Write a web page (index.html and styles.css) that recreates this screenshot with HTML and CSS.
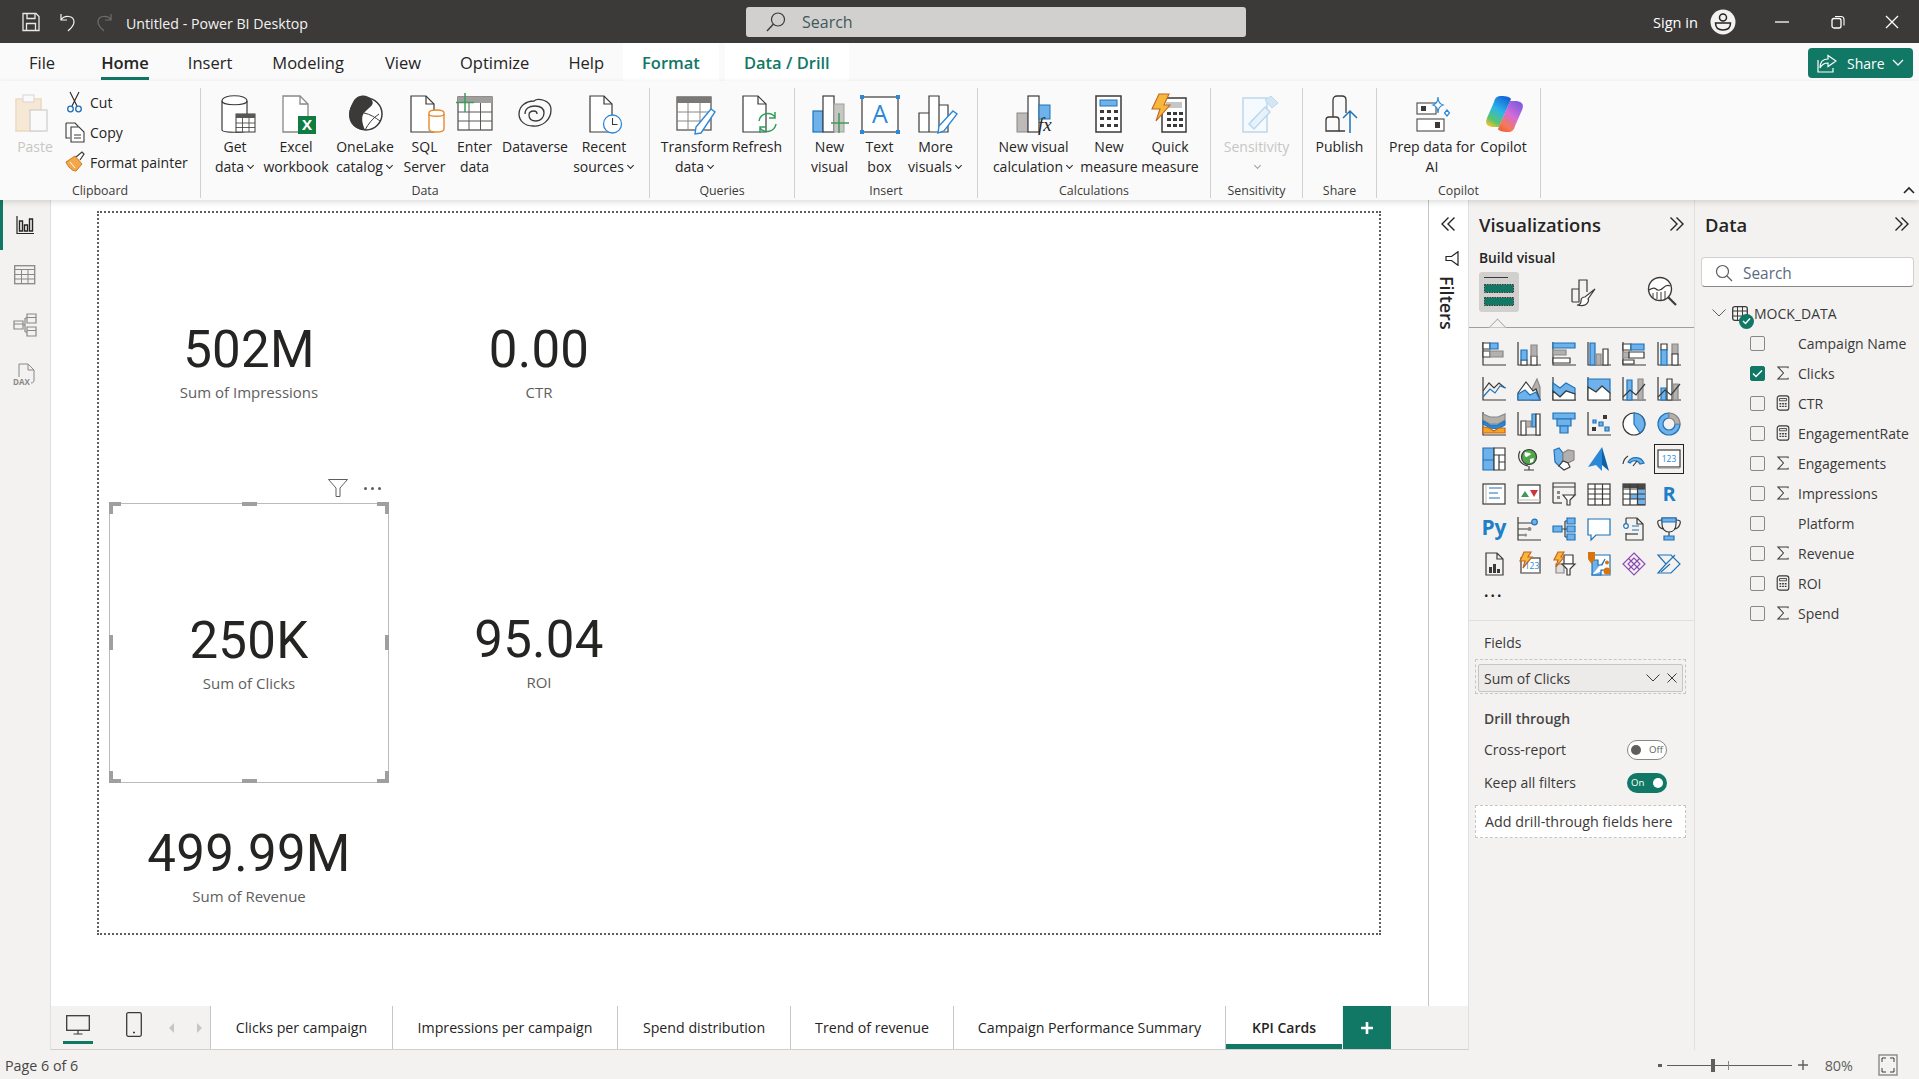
FILE: index.html
```html
<!DOCTYPE html>
<html lang="en">
<head>
<meta charset="utf-8">
<title>Untitled - Power BI Desktop</title>
<link rel="stylesheet" href="styles.css">
</head>
<body>
<svg class="defs" width="0" height="0" aria-hidden="true">
  <defs>
    <linearGradient id="cp1" x1="0.7" y1="0" x2="0.2" y2="1"><stop offset="0" stop-color="#1467d8"/><stop offset=".45" stop-color="#2bb6e8"/><stop offset=".8" stop-color="#5cc46a"/><stop offset="1" stop-color="#f2c230"/></linearGradient>
    <linearGradient id="cp2" x1="0.8" y1="0" x2="0.2" y2="1"><stop offset="0" stop-color="#7a5be0"/><stop offset=".45" stop-color="#d46bd8"/><stop offset=".8" stop-color="#f47a5a"/><stop offset="1" stop-color="#f2603a"/></linearGradient>
  </defs>
  <symbol id="sigma" viewBox="0 0 15 15"><path d="M13 2.5V1H2l6 6.5L2 14h11v-1.5" fill="none" stroke="#3b3a39" stroke-width="1.1"/></symbol>
  <symbol id="calc" viewBox="0 0 15 18"><rect x="1" y="1" width="13" height="16" rx="2.5" fill="none" stroke="#3b3a39" stroke-width="1.3"/><path d="M3.5 4h8v2.5h-8z" fill="none" stroke="#3b3a39"/><path d="M3.5 9h2v1.6h-2zm3 0h2v1.6h-2zm3 0h2v1.6h-2zm-6 3h2v1.6h-2zm3 0h2v1.6h-2zm3 0h2v1.6h-2z" fill="#3b3a39"/></symbol>
  <symbol id="dbl" viewBox="0 0 16 16"><path d="M1.5 1.5 8 8l-6.5 6.5M7.5 1.5 14 8l-6.5 6.5" fill="none" stroke="#252423" stroke-width="1.4"/></symbol>
</svg>

<header class="titlebar">
  <div class="tb-left">
    <svg class="ic-save" width="20" height="20" viewBox="0 0 20 20"><path d="M2 1.5h13l3 3v14H2z" fill="none" stroke="#e8e8e8" stroke-width="1.3"/><path d="M6 1.5v5h8v-5M5.500 18.500v-7h9v7" fill="none" stroke="#e8e8e8" stroke-width="1.3"/></svg>
    <svg class="ic-undo" width="18" height="20" viewBox="0 0 18 20"><path d="M2 2v6h6M2 8c3-5 13-5 13 2 0 4-3 6-6 9" fill="none" stroke="#f3f2f1" stroke-width="1.2"/></svg>
    <svg class="ic-redo" width="18" height="20" viewBox="0 0 18 20"><path d="M16 2v6h-6M16 8c-3-5-13-5-13 2 0 4 3 6 6 9" fill="none" stroke="#6e6d6b" stroke-width="1.2"/></svg>
    <span class="tb-title">Untitled - Power BI Desktop</span>
  </div>
  <div class="tb-search">
    <svg width="22" height="22" viewBox="0 0 22 22"><circle cx="13" cy="8.500" r="6.500" fill="none" stroke="#3b3a39" stroke-width="1.2"/><path d="M8.500 13 2 20" stroke="#3b3a39" stroke-width="1.400"/></svg>
    <span>Search</span>
  </div>
  <div class="tb-right">
    <span class="tb-sign">Sign in</span>
    <svg class="ic-avatar" width="26" height="26" viewBox="0 0 26 26"><circle cx="13" cy="13" r="12.500" fill="#f3f2f1"/><circle cx="13" cy="8.500" r="3.500" fill="none" stroke="#252423" stroke-width="1.500"/><path d="M5.500 14h15c0 4.500-3 7-7.500 7s-7.500-2.500-7.500-7z" fill="none" stroke="#252423" stroke-width="1.500"/></svg>
    <svg class="ic-min" width="14" height="14" viewBox="0 0 14 14"><path d="M0 7h14" stroke="#fff" stroke-width="1.300"/></svg>
    <svg class="ic-max" width="14" height="14" viewBox="0 0 14 14"><rect x="1" y="3.500" width="9" height="9.500" rx="2" fill="none" stroke="#fff" stroke-width="1.300"/><path d="M4 1.500h6c2 0 3 1 3 3v6" fill="none" stroke="#fff" stroke-width="1.100"/></svg>
    <svg class="ic-close" width="14" height="14" viewBox="0 0 14 14"><path d="M1 1l12 12M13 1 1 13" stroke="#fff" stroke-width="1.300"/></svg>
  </div>
</header>

<nav class="tabs">
  <span class="tab t-file">File</span>
  <span class="tab t-home">Home</span>
  <span class="tab t-insert">Insert</span>
  <span class="tab t-model">Modeling</span>
  <span class="tab t-view">View</span>
  <span class="tab t-opt">Optimize</span>
  <span class="tab t-help">Help</span>
  <span class="tab ctx t-format">Format</span>
  <span class="tab ctx t-drill">Data / Drill</span>
  <span class="share">
    <svg width="20" height="20" viewBox="0 0 20 20"><path d="M1 7v12h15v-4" fill="none" stroke="#fff" stroke-width="1.200"/><path d="M11 2.500l8 5.500-8 5.500v-3.500c-4 0-6 1-8 5 0-6 3-9 8-9z" fill="none" stroke="#fff" stroke-width="1.200"/></svg>
    <span>Share</span>
    <svg width="12" height="8" viewBox="0 0 12 8"><path d="M1 1l5 5 5-5" fill="none" stroke="#fff" stroke-width="1.300"/></svg>
  </span>
</nav>

<section class="ribbon">
  <div class="grp g-clip">
    <div class="grp-items">
      <div class="rb w65 dim">
        <svg class="ri" width="40" height="40" viewBox="0 0 40 40"><rect x="1" y="5" width="25" height="32" fill="#f6e8d4" stroke="#eadac0" stroke-width="1.500"/><rect x="8" y="1" width="11" height="7" fill="#fafafa" stroke="#d8d6d4"/><rect x="15" y="16" width="17" height="21" fill="#fafafa" stroke="#d2d0ce" stroke-width="1.300"/></svg>
        <span class="rb-text">Paste</span>
      </div>
      <div class="clip-col">
        <div class="clip-row"><svg width="20" height="22" viewBox="0 0 20 22"><path d="M5 1l7 14M14 1 7 15" stroke="#252423" fill="none" stroke-width="1.100"/><circle cx="5.500" cy="18" r="2.800" fill="none" stroke="#1f6fb5" stroke-width="1.300"/><circle cx="13.500" cy="18" r="2.800" fill="none" stroke="#1f6fb5" stroke-width="1.300"/></svg><span>Cut</span></div>
        <div class="clip-row"><svg width="20" height="22" viewBox="0 0 20 22"><path d="M1 2h9l3 3v1" fill="none" stroke="#3b3a39" stroke-width="1.100"/><path d="M1 2v15h4" fill="none" stroke="#3b3a39" stroke-width="1.100"/><path d="M6 6h8l5 5v10H6z" fill="#fff" stroke="#3b3a39" stroke-width="1.100"/><path d="M9 14h7M9 17h7" stroke="#3b3a39"/></svg><span>Copy</span></div>
        <div class="clip-row"><svg width="20" height="22" viewBox="0 0 20 22"><path d="M1 11l9-6 7 8-6 7c-4 0-8-4-10-9z" fill="#f4a64a" stroke="#c87a1e"/><path d="M11 6l6-5 2 2-4 6" fill="#fff" stroke="#3b3a39" stroke-width="1.200"/><path d="M5 11l5 6" stroke="#fff"/></svg><span>Format painter</span></div>
      </div>
    </div>
    <div class="grp-label">Clipboard</div>
  </div>

  <div class="grp g-data">
    <div class="grp-items">
      <div class="rb w60">
        <svg class="ri" width="40" height="40" viewBox="0 0 40 40"><path d="M7 7c0-7 25-7 25 0v29c0 3-25 3-25 0z" fill="#fff" stroke="#3b3a39" stroke-width="1.200"/><path d="M7 7c0 5 25 5 25 0" fill="none" stroke="#3b3a39" stroke-width="1.200"/><rect x="21" y="20" width="19" height="18" fill="#fff" stroke="#3b3a39"/><rect x="21" y="20" width="19" height="4" fill="#5a5856"/><path d="M27.500 24v14M34 24v14M21 29h19M21 33.500h19" stroke="#3b3a39" stroke-width=".8"/></svg>
        <span class="rb-text">Get</span><span class="rb-text">data<i class="cv"></i></span>
      </div>
      <div class="rb w62">
        <svg class="ri" width="40" height="40" viewBox="0 0 40 40"><path d="M7 2h17l8 8v28H7z" fill="#fff" stroke="#8a8886" stroke-width="1.300"/><path d="M24 2v8h8" fill="none" stroke="#8a8886" stroke-width="1.300"/><rect x="22" y="22" width="18" height="18" fill="#107c41"/><text x="31" y="36" class="svgx">X</text></svg>
        <span class="rb-text">Excel</span><span class="rb-text">workbook</span>
      </div>
      <div class="rb w76">
        <svg class="ri" width="40" height="40" viewBox="0 0 40 40"><circle cx="21" cy="20" r="16" fill="#fff" stroke="#3b3a39" stroke-width="1.500"/><path d="M8 8c4-8 14-8 18-3 5 6-2 8-7 14-3 4-2 10 1 17-9 0-16-6-16-15 0-5 2-9 4-13z" fill="#3b3a39"/><path d="M19 19c6 1 12 5 16 8M20 36c3-6 8-12 14-16" fill="none" stroke="#3b3a39"/></svg>
        <span class="rb-text">OneLake</span><span class="rb-text">catalog<i class="cv"></i></span>
      </div>
      <div class="rb w43">
        <svg class="ri" width="40" height="40" viewBox="0 0 40 40"><path d="M6 2h15l8 8v28H6z" fill="#fff" stroke="#3b3a39" stroke-width="1.200"/><path d="M21 2v8h8" fill="none" stroke="#3b3a39" stroke-width="1.200"/><path d="M24 19c0-4 15-4 15 0v16c0 4-15 4-15 0z" fill="#fff" stroke="#e8892c" stroke-width="1.400"/><path d="M24 20c0 3 15 3 15 0" fill="none" stroke="#e8892c" stroke-width="1.400"/></svg>
        <span class="rb-text">SQL</span><span class="rb-text">Server</span>
      </div>
      <div class="rb w57">
        <svg class="ri" width="40" height="40" viewBox="0 0 40 40"><rect x="3" y="3" width="34" height="33" fill="#fff" stroke="#5a5856" stroke-width="1.300"/><rect x="3" y="3" width="34" height="6" fill="#a19f9d"/><path d="M14 9v27M25.500 9v27M3 18h34M3 27h34" stroke="#5a5856"/><path d="M10 -1v19M1 8.500h18" stroke="#3f9a5c" stroke-width="1.500"/></svg>
        <span class="rb-text">Enter</span><span class="rb-text">data</span>
      </div>
      <div class="rb w64">
        <svg class="ri" width="40" height="40" viewBox="0 0 40 40"><path d="M4 20c0-8 7-13 15-13 3-3 17-2 17 9 0 10-9 17-18 16-8 0-14-5-14-12z" fill="none" stroke="#3b3a39" stroke-width="1.300"/><path d="M10 20c0-5 4-8 10-8s9 3 9 7-3 8-8 8-7-3-7-6 2-4 5-4 3 2 3 3" fill="none" stroke="#3b3a39" stroke-width="1.300"/></svg>
        <span class="rb-text">Dataverse</span>
      </div>
      <div class="rb w74">
        <svg class="ri" width="40" height="40" viewBox="0 0 40 40"><path d="M6 2h14l8 8v28H6z" fill="#fff" stroke="#3b3a39" stroke-width="1.200"/><path d="M20 2v8h8" fill="none" stroke="#3b3a39" stroke-width="1.200"/><circle cx="28.500" cy="30" r="9" fill="#fff" stroke="#2b88d8" stroke-width="1.300"/><path d="M28.500 24v6.500h5" fill="none" stroke="#3b3a39" stroke-width="1.100"/></svg>
        <span class="rb-text">Recent</span><span class="rb-text">sources<i class="cv"></i></span>
      </div>
    </div>
    <div class="grp-label">Data</div>
  </div>

  <div class="grp g-query">
    <div class="grp-items">
      <div class="rb w80">
        <svg class="ri" width="40" height="40" viewBox="0 0 40 40"><rect x="2" y="3" width="34" height="33" fill="#fff" stroke="#5a5856" stroke-width="1.300"/><rect x="2" y="3" width="34" height="6" fill="#7a7876"/><path d="M13 9v27M25 9v27M2 18h34M2 27h34" stroke="#8a8886"/><path d="M36 15l4 3-14 21-6 1 1-7z" fill="#fff" stroke="#2b88d8" stroke-width="1.400"/></svg>
        <span class="rb-text">Transform</span><span class="rb-text">data<i class="cv"></i></span>
      </div>
      <div class="rb w44">
        <svg class="ri" width="40" height="40" viewBox="0 0 40 40"><path d="M6 2h15l8 8v28H6z" fill="#fff" stroke="#3b3a39" stroke-width="1.200"/><path d="M21 2v8h8" fill="none" stroke="#3b3a39" stroke-width="1.200"/><path d="M22 27a9 9 0 0 1 16-4M38 18v6h-6M39 30a9 9 0 0 1-16 4M23 39v-6h6" fill="none" stroke="#2f9e5b" stroke-width="1.500"/></svg>
        <span class="rb-text">Refresh</span>
      </div>
    </div>
    <div class="grp-label">Queries</div>
  </div>

  <div class="grp g-insert">
    <div class="grp-items">
      <div class="rb w45">
        <svg class="ri" width="40" height="40" viewBox="0 0 40 40"><rect x="3" y="17" width="10" height="21" fill="#6fb1ea" stroke="#1f73b7" stroke-width="1.200"/><rect x="13" y="2" width="11" height="36" fill="#fff" stroke="#3b3a39" stroke-width="1.200"/><rect x="24" y="10" width="10" height="28" fill="#c8c6c4" stroke="#a19f9d"/><path d="M29 19v20M21 29h18" stroke="#3f9a5c" stroke-width="1.500"/></svg>
        <span class="rb-text">New</span><span class="rb-text">visual</span>
      </div>
      <div class="rb w55">
        <svg class="ri" width="40" height="40" viewBox="0 0 40 40"><rect x="2" y="3" width="36" height="35" fill="#fff" stroke="#3b3a39" stroke-width="1.200"/><path d="M0 1h4v4H0zM36 1h4v4h-4zM0 36h4v4H0zM36 36h4v4h-4z" fill="#2b88d8"/><text x="20" y="29" class="svga">A</text></svg>
        <span class="rb-text">Text</span><span class="rb-text">box</span>
      </div>
      <div class="rb w57">
        <svg class="ri" width="40" height="40" viewBox="0 0 40 40"><path d="M3 19h10v19H3zM13 2h10v36H13zM23 11h9v27h-9z" fill="#fff" stroke="#3b3a39" stroke-width="1.200"/><path d="M37 17l4 3-13 17-6 2 1-7z" fill="#fff" stroke="#2b88d8" stroke-width="1.400"/></svg>
        <span class="rb-text">More</span><span class="rb-text">visuals<i class="cv"></i></span>
      </div>
    </div>
    <div class="grp-label">Insert</div>
  </div>

  <div class="grp g-calc">
    <div class="grp-items">
      <div class="rb w97">
        <svg class="ri" width="40" height="40" viewBox="0 0 40 40"><rect x="3" y="19" width="11" height="19" fill="#bdbbb9" stroke="#8a8886"/><rect x="14" y="2" width="11" height="36" fill="#fff" stroke="#3b3a39" stroke-width="1.200"/><rect x="25" y="11" width="11" height="14" fill="#6fb1ea" stroke="#1f73b7"/><text x="24" y="37" class="svgfx">fx</text></svg>
        <span class="rb-text">New visual</span><span class="rb-text">calculation<i class="cv"></i></span>
      </div>
      <div class="rb w54">
        <svg class="ri" width="40" height="40" viewBox="0 0 40 40"><rect x="7" y="2" width="25" height="36" fill="#fff" stroke="#3b3a39" stroke-width="1.500"/><rect x="11" y="6" width="17" height="6" fill="#6fb1ea" stroke="#1f73b7"/><path d="M11 16h4v3h-4zM18 16h4v3h-4zM25 16h4v3h-4zM11 23h4v3h-4zM18 23h4v3h-4zM25 23h4v3h-4zM11 30h4v3h-4zM18 30h4v3h-4zM25 30h4v3h-4z" fill="#3b3a39"/></svg>
        <span class="rb-text">New</span><span class="rb-text">measure</span>
      </div>
      <div class="rb w68">
        <svg class="ri" width="40" height="40" viewBox="0 0 40 40"><rect x="12" y="4" width="24" height="34" fill="#fff" stroke="#3b3a39" stroke-width="1.500"/><rect x="16" y="8" width="16" height="6" fill="#c8c6c4"/><path d="M17 18h4v3h-4zM23 18h4v3h-4zM29 18h4v3h-4zM17 24h4v3h-4zM23 24h4v3h-4zM29 24h4v3h-4zM17 30h4v3h-4zM23 30h4v3h-4zM29 30h4v3h-4z" fill="#3b3a39"/><path d="M9 0h10l-5 11h6L6 27l4-12H2z" fill="#f5b73c" stroke="#c8641e" stroke-width="1.100"/></svg>
        <span class="rb-text">Quick</span><span class="rb-text">measure</span>
      </div>
    </div>
    <div class="grp-label">Calculations</div>
  </div>

  <div class="grp g-sens">
    <div class="grp-items">
      <div class="rb wfull dim">
        <svg class="ri" width="40" height="40" viewBox="0 0 40 40"><path d="M6 4h24v34H6z" fill="#f5fafe" stroke="#bcd8ec" stroke-width="1.500"/><path d="M12 30l16-17 5 5-16 17z" fill="#e8f2fa" stroke="#bcd8ec" stroke-width="1.500"/><path d="M28 6l6-4 7 7-6 5z" fill="#d3e6f4" stroke="#bcd8ec"/><path d="M14 27l12-12" stroke="#bcd8ec"/></svg>
        <span class="rb-text">Sensitivity</span><span class="rb-text"><i class="cv dimc"></i></span>
      </div>
    </div>
    <div class="grp-label">Sensitivity</div>
  </div>

  <div class="grp g-share">
    <div class="grp-items">
      <div class="rb wfull">
        <svg class="ri" width="40" height="40" viewBox="0 0 40 40"><path d="M6 37V26c0-2 1-3 3-3h7c2 0 3 1 3 3v11z" fill="none" stroke="#3b3a39" stroke-width="1.300"/><path d="M13 23V6c0-3 2-4 4-4h5c2 0 4 1 4 4v13M19 37h6" fill="none" stroke="#3b3a39" stroke-width="1.300"/><path d="M30 39V17M23 24l7-7 7 7" fill="none" stroke="#1f73b7" stroke-width="1.500"/></svg>
        <span class="rb-text">Publish</span>
      </div>
    </div>
    <div class="grp-label">Share</div>
  </div>

  <div class="grp g-copilot">
    <div class="grp-items">
      <div class="rb w88">
        <svg class="ri" width="40" height="40" viewBox="0 0 40 40"><rect x="5" y="9" width="19" height="11" fill="#fff" stroke="#5a5856" stroke-width="1.200"/><rect x="9" y="12" width="5" height="5" fill="#3b3a39"/><rect x="5" y="25" width="27" height="12" fill="#fff" stroke="#5a5856" stroke-width="1.200"/><rect x="23" y="28" width="5" height="6" fill="#3b3a39"/><path d="M26 3c0 5 2 7 5 8-3 1-5 3-5 8 0-5-2-7-5-8 3-1 5-3 5-8z" fill="#fff" stroke="#2b88d8" stroke-width="1.200"/><path d="M35 16l2.500 3-2.500 3-2.500-3z" fill="#fff" stroke="#2b88d8" stroke-width="1.200"/></svg>
        <span class="rb-text">Prep data for</span><span class="rb-text">AI</span>
      </div>
      <div class="rb w55">
        <svg class="ri" width="40" height="40" viewBox="0 0 40 40"><path d="M17 2C13 2 11 4 10 8L3 24c-3 7 2 9 7 9h5L27 5c-1-2-4-3-10-3z" fill="url(#cp1)"/><path d="M24 38c4 0 6-2 7-6l7-16c3-7-2-9-7-9h-5L14 35c1 2 4 3 10 3z" fill="url(#cp2)"/></svg>
        <span class="rb-text">Copilot</span>
      </div>
    </div>
    <div class="grp-label">Copilot</div>
  </div>
  <svg class="collapse" width="12" height="8" viewBox="0 0 12 8"><path d="M1 7l5-5 5 5" fill="none" stroke="#252423" stroke-width="1.600"/></svg>
</section>

<main class="workspace">
  <aside class="rail">
    <div class="rail-item active"><svg width="18" height="18" viewBox="0 0 18 18"><path d="M1 0v17.500h17" fill="none" stroke="#252423" stroke-width="1.200"/><path d="M3.500 5h3v10h-3zM8.500 9h3v6h-3zM13.500 3h3v12h-3z" fill="none" stroke="#252423" stroke-width="1.400"/></svg></div>
    <div class="rail-item"><svg width="22" height="20" viewBox="0 0 22 20"><rect x=".700" y=".700" width="20" height="18" fill="none" stroke="#8a8886" stroke-width="1.300"/><path d="M.7 4.500h20M.7 9.500h20M.7 14h20M7.500 4.500V19M14 4.500V19" stroke="#8a8886"/></svg></div>
    <div class="rail-item"><svg width="24" height="24" viewBox="0 0 24 24"><path d="M1 8h9v8H1zM14 1h9v9h-9zM14 14h9v9h-9zM10 12h2M12 5v14M12 5h2M12 19h2" fill="none" stroke="#8a8886" stroke-width="1.200"/><path d="M14 4.500h9M14 17.500h9M1 11h9" stroke="#8a8886"/></svg></div>
    <div class="rail-item"><svg width="24" height="24" viewBox="0 0 24 24"><path d="M6 14V1h9l6 6v10c0 2-1 3-3 3" fill="none" stroke="#8a8886"/><path d="M15 1v6h6" fill="none" stroke="#8a8886"/><text x="0" y="22" class="svgdax">DAX</text></svg></div>
  </aside>

  <div class="report">
    <div class="report-top">
      <div class="canvas">
        <div class="page">
          <div class="kpi k-a1"><div class="kpi-num">502M</div><div class="kpi-lbl">Sum of Impressions</div></div>
          <div class="kpi k-a2"><div class="kpi-num">0.00</div><div class="kpi-lbl">CTR</div></div>
          <div class="kpi kpi-sel">
            <div class="kpi-num">250K</div><div class="kpi-lbl">Sum of Clicks</div>
            <div class="sel-tools">
              <svg width="20" height="18" viewBox="0 0 20 18"><path d="M.5.500h19l-7.500 8.500v8.500h-4V9z" fill="none" stroke="#605e5c"/></svg>
              <span class="sel-dots"><i></i><i></i><i></i></span>
            </div>
            <i class="h h-tl"></i><i class="h h-tr"></i><i class="h h-bl"></i><i class="h h-br"></i>
            <i class="m m-t"></i><i class="m m-b"></i><i class="m m-l"></i><i class="m m-r"></i>
          </div>
          <div class="kpi k-b2"><div class="kpi-num">95.04</div><div class="kpi-lbl">ROI</div></div>
          <div class="kpi k-c1"><div class="kpi-num">499.99M</div><div class="kpi-lbl">Sum of Revenue</div></div>
        </div>
      </div>
      <aside class="filters">
        <svg class="f-dbl" width="16" height="16" viewBox="0 0 16 16"><use href="#dbl" transform="matrix(-1 0 0 1 16 0)"/></svg>
        <svg class="f-fun" width="14" height="15" viewBox="0 0 14 15"><path d="M13 .700v13.600L6.500 9.500H1V5.500h5.500z" fill="none" stroke="#252423" stroke-width="1.200"/></svg>
        <span class="f-text">Filters</span>
      </aside>
    </div>
    <div class="pagebar">
      <div class="pb-tools">
        <div class="dev dev-on"><svg width="24" height="20" viewBox="0 0 24 20"><rect x=".700" y=".700" width="22.600" height="14.600" fill="none" stroke="#3b3a39" stroke-width="1.300"/><path d="M12 15.500V19M7.500 19h9" stroke="#3b3a39" stroke-width="1.200"/></svg></div>
        <div class="dev"><svg width="16" height="25" viewBox="0 0 16 25"><rect x=".700" y=".700" width="14.600" height="23.600" rx="1.500" fill="none" stroke="#3b3a39" stroke-width="1.300"/><path d="M7 20.500h2" stroke="#3b3a39" stroke-width="1.600"/></svg></div>
        <span class="pb-arr l"></span><span class="pb-arr r"></span>
      </div>
      <span class="ptab p1">Clicks per campaign</span>
      <span class="ptab p2">Impressions per campaign</span>
      <span class="ptab p3">Spend distribution</span>
      <span class="ptab p4">Trend of revenue</span>
      <span class="ptab p5">Campaign Performance Summary</span>
      <span class="ptab ptab-on p6">KPI Cards</span>
      <span class="padd"><svg width="14" height="14" viewBox="0 0 14 14"><path d="M7 1v12M1 7h12" stroke="#fff" stroke-width="2.600"/></svg></span>
    </div>
  </div>

  <aside class="viz">
    <div class="pane-head"><span>Visualizations</span><svg width="16" height="16"><use href="#dbl"/></svg></div>
    <div class="build">Build visual</div>
    <div class="build-tabs">
      <div class="bt on"><svg width="40" height="40" viewBox="0 0 40 40"><path d="M5 5.500h24" stroke="#3b3a39"/><rect x="5.500" y="12.500" width="29" height="8" fill="#117865" stroke="#3b3a39" stroke-dasharray="1.500 1"/><rect x="5.500" y="25.500" width="29" height="8" fill="#117865" stroke="#3b3a39" stroke-dasharray="1.500 1"/></svg></div>
      <div class="bt bt2"><svg width="30" height="30" viewBox="0 0 30 30"><path d="M4 25V12h7V3h8v12M4 25h7V12" fill="none" stroke="#3b3a39" stroke-width="1.200"/><path d="M27 12 17 20c-3 0-4 2-4 4 0 3-2 4-4 4 4 1 9 1 11-3 1-2 0-3 0-3z" fill="#fff" stroke="#3b3a39" stroke-width="1.200"/></svg></div>
      <div class="bt bt3"><svg width="32" height="32" viewBox="0 0 32 32"><circle cx="14" cy="13" r="11.500" fill="#fff" stroke="#3b3a39" stroke-width="1.400"/><path d="M3 14c3-2 5-3 7-1 2 2 5 1 7-1 2-2 5-3 7-2" fill="none" stroke="#3b3a39" stroke-width="1.200"/><path d="M7 17v5M11 16v7M15 16v8M19 15v8" stroke="#3b3a39"/><path d="M22 21l8 8" stroke="#3b3a39" stroke-width="2.200"/></svg></div>
    </div>
    <div class="tab-rule"><i class="notch"></i></div>
    <div class="viz-grid">
      <svg class="vi" viewBox="0 0 24 24"><path class="d" d="M1 0v23h23"/><path class="w" d="M1 1h7v6H1z"/><path class="b" d="M8 1h8v6H8z"/><path class="w" d="M1 9h7v6H1z"/><path class="g" d="M8 9h13v6H8z"/></svg>
      <svg class="vi" viewBox="0 0 24 24"><path class="d" d="M1 0v23h23"/><path class="w" d="M4 18h6v5H4z"/><path class="b" d="M4 8h6v10H4z"/><path class="w" d="M14 14h6v9h-6z"/><path class="g" d="M14 3h6v11h-6z"/></svg>
      <svg class="vi" viewBox="0 0 24 24"><path class="d" d="M1 0v23h23"/><path class="b" d="M1 1h22v5H1z"/><path class="g" d="M1 8h13v5H1z"/><path class="w" d="M1 16h17v5H1z"/></svg>
      <svg class="vi" viewBox="0 0 24 24"><path class="d" d="M1 0v23h23"/><path class="b" d="M3 1h5v22H3z"/><path class="g" d="M9 12h5v11H9z"/><path class="w" d="M16 7h5v16h-5z"/></svg>
      <svg class="vi" viewBox="0 0 24 24"><path class="d" d="M1 0v23h23"/><path class="w" d="M1 2h8v6H1z"/><path class="b" d="M9 2h13v6H9z"/><path class="g" d="M1 10h6v6H1z"/><path class="w" d="M7 10h15v6H7z"/><path class="w" d="M1 18h11v4H1z"/></svg>
      <svg class="vi" viewBox="0 0 24 24"><path class="d" d="M1 0v23h23"/><path class="w" d="M4 2h6v6H4z"/><path class="b" d="M4 8h6v15H4z"/><path class="g" d="M15 2h6v10h-6z"/><path class="w" d="M15 12h6v11h-6z"/></svg>

      <svg class="vi" viewBox="0 0 24 24"><path class="d" d="M1 0v23h23"/><path class="d" d="M1 14l6-8 5 5 5-5 6 5"/><path class="bl" d="M1 20l7-8 5 4 5-7 6 2"/></svg>
      <svg class="vi" viewBox="0 0 24 24"><path class="g" d="M14 14l6-12 3 8v13H14z"/><path class="w" d="M1 16l8-11 7 9 3-2 4 11H1z"/><path class="b" d="M1 23v-6l7-4 5 5 6-3 4 8z"/></svg>
      <svg class="vi" viewBox="0 0 24 24"><path class="d" d="M1 0v23h23"/><path class="b" d="M1 6l7 5 6-5 9 5v6l-9-3-6 6-7-6z"/><path class="w" d="M1 14l7 6 6-6 9 3v6H1z"/></svg>
      <svg class="vi" viewBox="0 0 24 24"><path class="d" d="M1 0v23h23"/><path class="b" d="M1 2h22v14l-8-7-6 6-8-5z"/><path class="w" d="M1 10l8 5 6-6 8 7v7H1z"/></svg>
      <svg class="vi" viewBox="0 0 24 24"><path class="d" d="M1 0v23h23"/><path class="b" d="M5 3h5v20H5z"/><path class="g" d="M16 2h5v21h-5z"/><path class="d" d="M1 20l7-7 6 5 9-11"/></svg>
      <svg class="vi" viewBox="0 0 24 24"><path class="d" d="M1 0v23h23"/><path class="b" d="M4 11h5v12H4z"/><path class="w" d="M10 2h5v21h-5z"/><path class="g" d="M16 7h5v16h-5z"/><path class="d" d="M1 20l7-7 6 5 9-11"/></svg>

      <svg class="vi" viewBox="0 0 24 24"><path class="d" d="M1 0v23h23"/><path class="g" d="M1 2l7 3 8 0 7-3v6l-7 4-8 0-7-4z"/><path class="bf" d="M1 9l7 4 8 0 7-4v4l-7 4-8-1-7-4z"/><path class="of" d="M1 15l6 1 5 3 5-3 6 0v5H1z"/></svg>
      <svg class="vi" viewBox="0 0 24 24"><path class="d" d="M1 0v23h23"/><path class="w" d="M4 9h5v14H4z"/><path class="g" d="M9 9h5v6H9z"/><path class="b" d="M15 2h4v13h-4z"/><path class="w" d="M19 2h4v21h-4z"/></svg>
      <svg class="vi" viewBox="0 0 24 24"><path class="b" d="M1 1h22v6H1z"/><path class="b" d="M5 7h14v7H5z"/><path class="b" d="M8 14h8v7H8z"/></svg>
      <svg class="vi" viewBox="0 0 24 24"><path class="d" d="M1 0v23h23"/><path d="M16 3h4v4h-4zM5 15h4v4H5z" class="k"/><path d="M6 8h3v3H6zM12 10h4v4h-4zM18 15h4v4h-4z" class="b"/></svg>
      <svg class="vi" viewBox="0 0 24 24"><circle class="w" cx="12" cy="12" r="11"/><path class="b" d="M12 1a11 11 0 0 1 6 20l-6-9z"/></svg>
      <svg class="vi" viewBox="0 0 24 24"><path class="b" d="M12 1a11 11 0 1 0 11 11h-5a6 6 0 1 1-6-6z"/><path class="g" d="M12 1a11 11 0 0 1 11 11h-5a6 6 0 0 0-6-6z"/></svg>

      <svg class="vi" viewBox="0 0 24 24"><path class="b" d="M1 1h11v12H1zM1 13h11v10H1z"/><path class="w" d="M12 1h11v7H12zM12 8h5v15h-5zM17 8h6v7h-6zM17 15h6v8h-6z"/></svg>
      <svg class="vi" viewBox="0 0 24 24"><circle cx="12" cy="10" r="7.500" fill="#4ea94e" stroke="#3b3a39"/><path d="M8 5c2 1 5 0 6 2-1 2-3 1-4 3-2 0-3-2-2-5zM13 12l4-1-1 4-3 1z" fill="#fff"/><path class="d" d="M3 4c-3 6-1 13 8 15M7 23h10M12 19v4"/></svg>
      <svg class="vi" viewBox="0 0 24 24"><path class="b" d="M2 3l5-2 4 5 0 8-4 5-4-4z"/><path class="g" d="M11 6l5-3 6 1v9l-6 3-5-2z"/><path class="w" d="M7 19l4-5 5 2 2 4-6 3z" fill-opacity="1"/></svg>
      <svg class="vi" viewBox="0 0 24 24"><path d="M15 0v24l-6-6-8 2z" fill="#2b88d8"/><path d="M15 0l7 24-7-6z" fill="#0f5fa8"/></svg>
      <svg class="vi" viewBox="0 0 24 24"><path class="b" d="M6 15a9 9 0 0 1 16 1l-4 1a6 6 0 0 0-10-1z"/><path class="d" d="M1 17a11 11 0 0 1 5-8M11 19l4-5"/></svg>
      <div class="vi-sel"><svg class="vi" viewBox="0 0 24 24"><rect class="w" x="1" y="3" width="22" height="17"/><path d="M1 21h22" stroke="#a19f9d" stroke-width="2"/><text x="12" y="15" class="svg123">123</text></svg></div>

      <svg class="vi" viewBox="0 0 24 24"><rect class="w" x="1" y="2" width="22" height="20"/><path d="M4 3v18" stroke="#c8c6c4"/><path d="M7 6h13M7 11h9M7 16h11" stroke="#1f73b7" stroke-width="1.800"/></svg>
      <svg class="vi" viewBox="0 0 24 24"><rect class="w" x="1" y="3" width="22" height="18"/><path d="M4 15l4-6 4 6z" fill="#3f9a5c"/><path d="M13 8h8l-4 7z" fill="#d13438"/><path d="M1 18h22" stroke="#c8c6c4"/></svg>
      <svg class="vi" viewBox="0 0 24 24"><path class="d" d="M1 21V1h22v12M1 5h22"/><path class="d" d="M1 21h9"/><path d="M5 9h3v3H5zM5 14h3v3H5z" fill="#8a8886"/><path class="w" d="M11 13h12l-5 5v5h-3v-5z"/></svg>
      <svg class="vi" viewBox="0 0 24 24"><rect class="w" x="1" y="2" width="22" height="21"/><path class="d" d="M1 7h22M1 12h22M1 17h22M8 2v21M15.500 2v21"/></svg>
      <svg class="vi" viewBox="0 0 24 24"><rect class="w" x="1" y="2" width="22" height="21"/><path d="M1 2h22v4H1zM15 6h8v17h-8z" fill="#4a4846"/><path d="M15 7h8v15h-8zM8 12h7v5H8z" fill="#6fb1ea"/><path class="d" d="M1 7h22M1 12h22M1 17h22M8 2v21M15.500 2v21"/></svg>
      <svg class="vi" viewBox="0 0 24 24"><text x="12" y="19" class="svgr">R</text></svg>

      <svg class="vi" viewBox="0 0 24 24"><text x="12" y="18" class="svgpy">Py</text></svg>
      <svg class="vi" viewBox="0 0 24 24"><path class="d" d="M1 0v23h23M1 6h14M1 12h10M1 18h6"/><circle cx="17.500" cy="5" r="2.800" fill="#6fb1ea" stroke="#1f73b7"/><circle cx="12.500" cy="12" r="2" fill="#8a8886"/><circle cx="8.500" cy="18" r="1.500" fill="#8a8886"/></svg>
      <svg class="vi" viewBox="0 0 24 24"><path class="d" d="M10 12h3M13 4v16M13 4h2M13 12h2M13 20h2"/><path class="b" d="M1 9h9v6H1zM15 1h8v6h-8zM15 9h8v6h-8zM15 17h8v6h-8z"/></svg>
      <svg class="vi" viewBox="0 0 24 24"><path d="M1 2h22v16H9l-5 5v-5H1z" fill="#fff" stroke="#1f73b7" stroke-width="1.300"/></svg>
      <svg class="vi" viewBox="0 0 24 24"><path class="d" d="M4 1h11l6 6v16H4V16M4 11V1M15 1v6h6"/><circle cx="4" cy="9" r="2.300" fill="#fff" stroke="#1f73b7"/><path d="M10 9h7M10 13h7" stroke="#1f73b7"/><path d="M4 17h12" stroke="#3b3a39"/></svg>
      <svg class="vi" viewBox="0 0 24 24"><path class="d" d="M5 3c-4 0-5 1-4 4s3 5 6 5M19 3c4 0 5 1 4 4s-3 5-6 5"/><path class="d" d="M5 1h14v6c0 5-3 8-7 8s-7-3-7-8z"/><path d="M5 1h14v4H5z" fill="#6fb1ea" stroke="#1f73b7"/><path class="d" d="M12 15v4"/><path class="b" d="M7 19h10v4H7z"/></svg>

      <svg class="vi" viewBox="0 0 24 24"><path class="d" d="M4 23V1h11l6 6v16zM15 1v6h6"/><path d="M7 15h3v6H7zM11 12h3v9h-3zM15 17h3v4h-3z" fill="#3b3a39"/></svg>
      <svg class="vi" viewBox="0 0 24 24"><rect class="w" x="4" y="6" width="19" height="15"/><path d="M4 21h19" stroke="#a19f9d" stroke-width="1.600"/><path d="M7 0h7l-3 5h4l-9 11 2-7H3z" fill="#f5b73c" stroke="#c8641e" stroke-width=".8"/><text x="15" y="17" class="svg123">123</text></svg>
      <svg class="vi" viewBox="0 0 24 24"><path class="g" d="M4 12h8v9H4z" fill-opacity=".3"/><path class="w" d="M12 3h9v9h-9z"/><path class="w" d="M10 12h13l-5 5v6h-3v-6z"/><path d="M6 0h6L9 5h3l-8 10 2-7H2z" fill="#f5b73c" stroke="#c8641e" stroke-width=".8"/></svg>
      <svg class="vi" viewBox="0 0 24 24"><path d="M4 3h19v20H4" fill="#fff" stroke="#1f73b7" stroke-width="1.600"/><path d="M5 23V8h6v5h4l3-6M5 23h9v-5h4" fill="#6fb1ea" stroke="#1f73b7"/><path d="M1 0h7v7l-3.500 5L1 7z" fill="#d9730d"/><circle cx="20" cy="19" r="3.500" fill="#d9730d"/><circle cx="20" cy="10.500" r="2" fill="#d9730d"/></svg>
      <svg class="vi" viewBox="0 0 24 24"><path d="M12 1l11 11-11 11L1 12z M12 6l-6 6 6 6 6-6z" fill="none" stroke="#8c4bb5" stroke-width="1.300"/><path d="M6.500 6.500 17.500 17.500M17.500 6.500 6.500 17.500" stroke="#8c4bb5"/></svg>
      <svg class="vi" viewBox="0 0 24 24"><path d="M1 3h13l9 9-9 9H1l8-9z" fill="none" stroke="#1f73b7" stroke-width="1.400"/><path d="M9 12l9-9M4 20l9-8" fill="none" stroke="#1f73b7"/></svg>
      <span class="vi-more">...</span>
    </div>

    <div class="well-sec">
      <div class="well-title">Fields</div>
      <div class="well-drop">
        <div class="pill"><span>Sum of Clicks</span>
          <svg class="pill-cv" width="14" height="8" viewBox="0 0 14 8"><path d="M.5.500 7 7 13.500.5" fill="none" stroke="#3b3a39"/></svg>
          <svg width="10" height="10" viewBox="0 0 10 10"><path d="M.5.500l9 9M9.500.500l-9 9" stroke="#3b3a39"/></svg>
        </div>
      </div>
      <div class="drill-title">Drill through</div>
      <div class="opt-row"><span>Cross-report</span><span class="tog off"><i></i><b>Off</b></span></div>
      <div class="opt-row"><span>Keep all filters</span><span class="tog on"><b>On</b><i></i></span></div>
      <div class="add-drop">Add drill-through fields here</div>
    </div>
  </aside>

  <aside class="data">
    <div class="pane-head d-head"><span>Data</span><svg width="16" height="16"><use href="#dbl"/></svg></div>
    <div class="d-search"><svg width="18" height="18" viewBox="0 0 18 18"><circle cx="7.500" cy="7.500" r="6" fill="none" stroke="#605e5c" stroke-width="1.200"/><path d="M12 12l5 5" stroke="#605e5c" stroke-width="1.200"/></svg><span>Search</span></div>
    <div class="tree-root">
      <svg width="14" height="8" viewBox="0 0 14 8"><path d="M.5.500 7 7 13.500.5" fill="none" stroke="#605e5c"/></svg>
      <span class="tbl-ic"><svg width="16" height="15" viewBox="0 0 16 15"><rect x=".7" y=".7" width="14.600" height="13.600" rx="2" fill="none" stroke="#3b3a39" stroke-width="1.300"/><path d="M.7 5h14.600M.7 10h14.600M5.500.7v13.600M10.500.7v13.600" stroke="#3b3a39"/></svg><i class="tbl-ok"><svg width="9" height="8" viewBox="0 0 9 8"><path d="M1 4l2.500 2.500L8 1.500" fill="none" stroke="#fff" stroke-width="1.400"/></svg></i></span>
      <span class="tree-name">MOCK_DATA</span>
    </div>
    <div class="f-row"><i class="cb"></i><span class="f-ic"></span><span>Campaign Name</span></div>
    <div class="f-row"><i class="cb cb-on"><svg width="11" height="9" viewBox="0 0 11 9"><path d="M1 4.500 4 7.500l6-6" fill="none" stroke="#fff" stroke-width="1.400"/></svg></i><svg class="f-ic" width="14" height="14"><use href="#sigma"/></svg><span>Clicks</span></div>
    <div class="f-row"><i class="cb"></i><svg class="f-ic" width="14" height="16"><use href="#calc"/></svg><span>CTR</span></div>
    <div class="f-row"><i class="cb"></i><svg class="f-ic" width="14" height="16"><use href="#calc"/></svg><span>EngagementRate</span></div>
    <div class="f-row"><i class="cb"></i><svg class="f-ic" width="14" height="14"><use href="#sigma"/></svg><span>Engagements</span></div>
    <div class="f-row"><i class="cb"></i><svg class="f-ic" width="14" height="14"><use href="#sigma"/></svg><span>Impressions</span></div>
    <div class="f-row"><i class="cb"></i><span class="f-ic"></span><span>Platform</span></div>
    <div class="f-row"><i class="cb"></i><svg class="f-ic" width="14" height="14"><use href="#sigma"/></svg><span>Revenue</span></div>
    <div class="f-row"><i class="cb"></i><svg class="f-ic" width="14" height="16"><use href="#calc"/></svg><span>ROI</span></div>
    <div class="f-row"><i class="cb"></i><svg class="f-ic" width="14" height="14"><use href="#sigma"/></svg><span>Spend</span></div>
  </aside>
</main>

<footer class="status">
  <span class="st-page">Page 6 of 6</span>
  <div class="st-zoom">
    <span class="st-minus"></span>
    <span class="st-track"><i class="st-thumb"></i><i class="st-tick"></i></span>
    <svg width="10" height="10" viewBox="0 0 10 10"><path d="M5 0v10M0 5h10" stroke="#605e5c" stroke-width="1.400"/></svg>
    <span class="st-pct">80%</span>
    <svg class="st-fit" width="20" height="22" viewBox="0 0 20 22"><rect x="1" y="1" width="18" height="20" fill="none" stroke="#8a8886" stroke-width="1.400"/><path d="M4 8V4h4M12 4h4v4M16 14v4h-4M8 18H4v-4" fill="none" stroke="#3b3a39"/></svg>
  </div>
</footer>
</body>
</html>
```

FILE: styles.css
```css
* { box-sizing: border-box; }
html, body { margin: 0; padding: 0; }
body {
  width: 1919px; height: 1079px; overflow: hidden;
  display: flex; flex-direction: column;
  font-family: "Open Sans", "Noto Sans", sans-serif;
  font-size: 14px; color: #252423; background: #f3f2f1;
}
.defs { position: absolute; }
svg { display: block; flex: none; }
i { font-style: normal; }

/* title bar */
.titlebar { height: 43px; flex: none; background: #3b3a39; display: flex; align-items: center; position: relative; color: #fff; }
.tb-left { display: flex; align-items: center; width: 746px; padding-left: 21px; }
.ic-undo { margin-left: 18px; }
.ic-redo { margin-left: 18px; }
.tb-title { margin: 3px 0 0 13px; font-size: 14.2px; color: #f3f2f1; }
.tb-search { width: 500px; height: 30px; background: #d2d0ce; border-radius: 3px; display: flex; align-items: center; padding-left: 19px; color: #3e5a5a; font-size: 16px; }
.tb-search span { margin-left: 15px; }
.tb-right { margin-left: auto; display: flex; align-items: center; padding-right: 20px; }
.tb-sign { font-size: 14.6px; color: #fff; margin-right: 12px; }
.ic-min { margin-left: 39px; }
.ic-max { margin-left: 42px; }
.ic-close { margin-left: 40px; }

/* tabs */
.tabs { height: 38px; flex: none; background: #fafafa; display: flex; align-items: stretch; position: relative; font-size: 16.5px; }
.tab { display: flex; align-items: center; white-space: nowrap; color: #252423; }
.t-file { margin-left: 29px; }
.t-home { margin-left: 46px; font-weight: 600; position: relative; }
.t-home::after { content: ""; position: absolute; left: 0; right: 0; bottom: 1px; height: 3px; background: #117865; }
.t-insert { margin-left: 39px; }
.t-model { margin-left: 40px; }
.t-view { margin-left: 41px; }
.t-opt { margin-left: 39px; }
.t-help { margin-left: 39px; }
.ctx { color: #117865; font-weight: 600; background: #fff; padding: 0 19px; justify-content: center; }
.t-format { margin-left: 19px; }
.t-drill { margin-left: 6px; }
.share { position: absolute; left: 1808px; top: 5px; width: 105px; height: 30px; background: #117865; border-radius: 4px; color: #fff; display: flex; align-items: center; padding-left: 9px; font-size: 14px; }
.share span { margin-left: 10px; }
.share svg + span + svg { margin-left: 7px; }

/* ribbon */
.ribbon { height: 119px; flex: none; background: #fafafa; display: flex; align-items: flex-start; padding-top: 7px; position: relative; z-index: 2; box-shadow: 0 2px 6px rgba(0,0,0,.14); }
.grp { height: 110px; border-right: 1px solid #d2d0ce; display: flex; flex-direction: column; flex: none; }
.grp-items { height: 98px; display: flex; align-items: flex-start; }
.grp-label { height: 14px; line-height: 14px; text-align: center; font-size: 12.4px; color: #3b3a39; white-space: nowrap; }
.g-clip { width: 201px; }
.g-data { width: 449px; }
.g-query { width: 145px; }
.g-insert { width: 183px; }
.g-calc { width: 233px; }
.g-sens { width: 92px; }
.g-share { width: 74px; }
.g-copilot { width: 164px; }
.g-data .grp-items { padding-left: 4px; }
.g-query .grp-items { padding-left: 5px; }
.g-insert .grp-items { padding-left: 12px; }
.g-calc .grp-items { padding-left: 7px; }
.g-copilot .grp-items { padding-left: 11px; }
.rb { display: flex; flex-direction: column; align-items: center; flex: none; padding-top: 6px; }
.ri { overflow: visible; margin-bottom: 3px; }
.rb-text { height: 20px; line-height: 20px; font-size: 14px; color: #252423; white-space: nowrap; display: flex; align-items: center; }
.dim .rb-text { color: #c8c6c4; }
.w43 { width: 43px; } .w44 { width: 44px; } .w45 { width: 45px; } .w54 { width: 54px; } .w55 { width: 55px; } .w57 { width: 57px; }
.w60 { width: 60px; } .w62 { width: 62px; } .w64 { width: 64px; } .w65 { width: 70px; } .w68 { width: 68px; } .w74 { width: 74px; } .w76 { width: 76px; }
.w80 { width: 80px; } .w88 { width: 88px; } .w97 { width: 97px; } .wfull { width: 100%; }
.cv { display: inline-block; width: 5px; height: 5px; border-right: 1.2px solid #252423; border-bottom: 1.2px solid #252423; transform: rotate(45deg); margin: 0 2px 3px 4px; }
.dimc { border-color: #a19f9d; margin-left: 3px; }
.clip-col { display: flex; flex-direction: column; margin-top: -1px; margin-left: -5px; }
.clip-row { height: 30px; display: flex; align-items: center; font-size: 14px; white-space: nowrap; }
.clip-row span { margin-left: 5px; }
.collapse { position: absolute; left: 1903px; top: 105px; }
.svgx { font: 700 15px "Open Sans", sans-serif; fill: #fff; text-anchor: middle; }
.svga { font: 400 25px "Open Sans", sans-serif; fill: #2b88d8; text-anchor: middle; }
.svgfx { font: italic 400 19px "Liberation Serif", serif; fill: #252423; }
.svgdax { font: 700 8px "Open Sans", sans-serif; fill: #8a8886; }
.svg123 { font: 400 8.5px "Open Sans", sans-serif; fill: #2b88d8; text-anchor: middle; }
.svgr { font: 700 20px "Open Sans", sans-serif; fill: #1f7fc7; text-anchor: middle; }
.svgpy { font: 700 21px "Open Sans", sans-serif; fill: #1f7fc7; text-anchor: middle; }

/* workspace */
.workspace { flex: 1; min-height: 0; display: flex; }
.rail { width: 51px; flex: none; background: #f3f2f1; border-right: 1px solid #e1dfdd; }
.rail-item { height: 50px; display: flex; align-items: center; justify-content: center; position: relative; }
.rail-item.active::before { content: ""; position: absolute; left: 0; top: 0; bottom: 0; width: 3px; background: #117865; }

.report { width: 1417px; flex: none; display: flex; flex-direction: column; }
.report-top { flex: 1; min-height: 0; display: flex; background: #fff; }
.canvas { width: 1377px; flex: none; padding: 11px 0 0 46px; }
.page { width: 1284px; height: 724px; border: 2px dotted #605e5c; position: relative; }
.kpi { position: absolute; width: 280px; padding-top: 100px; display: flex; flex-direction: column; align-items: center; }
.k-a1 { left: 10px; top: 7px; }
.k-a2 { left: 300px; top: 7px; }
.k-b2 { left: 300px; top: 297px; }
.k-c1 { left: 10px; top: 511px; }
.kpi-num { height: 60px; line-height: 60px; font-family: Roboto, sans-serif; font-size: 51px; letter-spacing: .3px; color: #252423; white-space: nowrap; }
.kpi-lbl { height: 20px; line-height: 20px; margin-top: 2px; font-size: 15px; color: #605e5c; white-space: nowrap; }
.kpi-sel { left: 10px; top: 290px; height: 280px; padding-top: 107px; border: 1px solid #bdbbb9; }
.sel-tools { position: absolute; left: 218px; top: -25px; display: flex; align-items: center; }
.sel-dots { display: flex; gap: 4px; margin-left: 16px; }
.sel-dots i { width: 3px; height: 3px; border-radius: 50%; background: #605e5c; }
.h { position: absolute; width: 12px; height: 12px; border: 0 solid #a19f9d; }
.h-tl { left: -1px; top: -2px; border-width: 4px 0 0 4px; }
.h-tr { right: -1px; top: -2px; border-width: 4px 4px 0 0; }
.h-bl { left: -1px; bottom: -1px; border-width: 0 0 4px 4px; }
.h-br { right: -1px; bottom: -1px; border-width: 0 4px 4px 0; }
.m { position: absolute; background: #a19f9d; }
.m-t { left: 132px; top: -2px; width: 15px; height: 4px; }
.m-b { left: 132px; bottom: -1px; width: 15px; height: 4px; }
.m-l { left: -1px; top: 131px; width: 4px; height: 15px; }
.m-r { right: -1px; top: 131px; width: 4px; height: 15px; }

.filters { width: 40px; flex: none; background: #fff; border-left: 1px solid #c8c6c4; position: relative; }
.f-dbl { position: absolute; left: 11px; top: 16px; }
.f-fun { position: absolute; left: 16px; top: 51px; }
.f-text { position: absolute; left: 6px; top: 76px; writing-mode: vertical-rl; font-size: 18px; font-weight: 600; color: #252423; }

.pagebar { height: 44px; flex: none; display: flex; align-items: stretch; border-bottom: 1px solid #d2d0ce; background: #f3f2f1; position: relative; z-index: 1; }
.pb-tools { width: 160px; flex: none; display: flex; align-items: flex-start; background: #f3f2f1; border-right: 1px solid #c8c6c4; position: relative; padding-left: 12px; }
.dev { height: 38px; width: 30px; display: flex; justify-content: center; padding-top: 9px; }
.dev + .dev { margin-left: 26px; padding-top: 6px; }
.dev-on { border-bottom: 3px solid #117865; }
.pb-arr { position: absolute; top: 17px; width: 0; height: 0; border-top: 5px solid transparent; border-bottom: 5px solid transparent; }
.pb-arr.l { left: 118px; border-right: 5px solid #c8c6c4; }
.pb-arr.r { left: 146px; border-left: 5px solid #c8c6c4; }
.ptab { background: #fff; display: flex; align-items: center; justify-content: center; border-right: 1px solid #c8c6c4; font-size: 14.2px; color: #252423; white-space: nowrap; flex: none; }
.p1 { width: 182px; }
.p2 { width: 225px; }
.p3 { width: 173px; }
.p4 { width: 163px; }
.p5 { width: 272px; }
.p6 { width: 116px; font-size: 14px; }
.ptab-on { font-weight: 600; position: relative; border-right: none; }
.ptab-on::after { content: ""; position: absolute; left: 0; right: 0; bottom: 0; height: 5px; background: #117865; }
.padd { width: 48px; flex: none; background: #117865; display: flex; align-items: center; justify-content: center; margin-left: 1px; }

/* visualizations */
.viz { width: 226px; flex: none; border-left: 1px solid #e1dfdd; background: #f3f2f1; position: relative; }
.pane-head { height: 30px; margin-top: 9px; padding: 0 9px 0 10px; display: flex; align-items: center; justify-content: space-between; font-size: 18.4px; font-weight: 600; color: #252423; }
.build { margin: 9px 0 0 10px; height: 20px; line-height: 20px; font-size: 13.8px; font-weight: 600; }
.build-tabs { position: relative; height: 40px; margin-top: 4px; }
.bt { position: absolute; top: 0; width: 40px; height: 40px; display: flex; align-items: center; justify-content: center; border-radius: 3px; }
.bt.on { left: 10px; background: #d2d0ce; }
.bt2 { left: 94px; }
.bt3 { left: 173px; }
.tab-rule { height: 1px; margin-top: 15px; background: #a19f9d; position: relative; }
.notch { position: absolute; left: 22px; top: -6px; width: 13px; height: 13px; background: #f3f2f1; border-left: 1px solid #a19f9d; border-top: 1px solid #a19f9d; transform: rotate(45deg) ; clip-path: polygon(0 0, 100% 0, 0 100%); }
.viz-grid { display: grid; grid-template-columns: repeat(6, 35px); grid-auto-rows: 35px; padding: 8px 0 0 7px; justify-items: center; align-items: center; height: 293px; border-bottom: 1px solid #e1dfdd; }
.vi { width: 24px; height: 24px; overflow: visible; }
.vi-sel { width: 30px; height: 30px; border: 1px solid #252423; display: flex; align-items: center; justify-content: center; }
.vi-more { font-size: 18px; font-weight: 600; line-height: 12px; height: 20px; letter-spacing: 1.500px; align-self: start; margin-top: 3px; }
.vi path, .vi rect, .vi circle { stroke-width: 1.2; }
.d { fill: none; stroke: #3b3a39; }
.bl { fill: none; stroke: #1f73b7; }
.b { fill: #6fb1ea; stroke: #1f73b7; }
.bf { fill: #2b88d8; stroke: #1f73b7; }
.of { fill: #f5a623; stroke: #c8641e; }
.g { fill: #b3b0ad; stroke: #8a8886; }
.w { fill: #fff; stroke: #3b3a39; }
.k { fill: #3b3a39; }

.well-sec { padding-top: 12px; }
.well-title { margin-left: 15px; height: 20px; line-height: 20px; font-size: 14px; color: #3b3a39; }
.well-drop { margin: 6px 8px 0 6px; height: 35px; border: 1px dashed #c8c6c4; padding: 4px 2px; }
.pill { height: 28px; background: #edebe9; border: 1px solid #c8c6c4; border-radius: 2px; display: flex; align-items: center; padding: 0 5px; font-size: 14px; color: #3b3a39; }
.pill span { flex: 1; }
.pill-cv { margin-right: 7px; }
.drill-title { margin: 15px 0 0 15px; height: 20px; line-height: 20px; font-size: 14px; font-weight: 600; color: #484644; }
.opt-row { margin: 0 27px 0 15px; height: 33px; display: flex; align-items: center; justify-content: space-between; font-size: 14px; color: #3b3a39; }
.drill-title + .opt-row { margin-top: 4px; }
.tog { width: 40px; height: 20px; border-radius: 10px; display: flex; align-items: center; justify-content: space-between; font-size: 9.600px; padding: 0 3px; }
.tog i { width: 10px; height: 10px; border-radius: 50%; }
.tog b { font-weight: 400; }
.tog.off { border: 1px solid #8a8886; background: #fff; color: #605e5c; }
.tog.off i { background: #605e5c; }
.tog.on { background: #117865; color: #fff; padding: 0 4px; }
.tog.on i { background: #fff; }
.add-drop { margin: 6px 8px 0 6px; height: 33px; background: #fff; border: 1px dashed #c8c6c4; line-height: 31px; padding-left: 9px; font-size: 14.3px; color: #3b3a39; white-space: nowrap; }

/* data */
.data { flex: 1; border-left: 1px solid #e1dfdd; background: #f3f2f1; }
.d-head { padding-left: 10px; }
.d-search { margin: 18px 5px 0 6px; height: 30px; background: #fff; border: 1px solid #d2d0ce; border-bottom-color: #8a8886; border-radius: 4px; display: flex; align-items: center; padding: 2px 0 0 13px; color: #605e5c; font-size: 15.400px; }
.d-search span { margin-left: 10px; color: #5c6a80; }
.tree-root { display: flex; align-items: center; height: 30px; margin-top: 11px; padding-left: 17px; position: relative; }
.tbl-ic { position: relative; margin-left: 6px; }
.tbl-ok { position: absolute; left: 7px; top: 8px; width: 15px; height: 15px; border-radius: 50%; background: #117865; display: flex; align-items: center; justify-content: center; }
.tree-name { margin-left: 6px; font-size: 14px; color: #3b3a39; }
.f-row { height: 30px; display: flex; align-items: center; padding-left: 55px; font-size: 14px; color: #3b3a39; white-space: nowrap; }
.cb { width: 15px; height: 15px; border: 1px solid #8a8886; border-radius: 2px; background: #f3f2f1; flex: none; display: flex; align-items: center; justify-content: center; }
.cb-on { background: #117865; border-color: #117865; }
.f-ic { width: 14px; margin: 0 8px 0 11px; flex: none; }

/* status */
.status { height: 29px; flex: none; background: #f3f2f1; display: flex; align-items: center; padding-top: 1px; }
.st-page { margin-left: 5px; font-size: 14.3px; color: #484644; }
.st-zoom { margin-left: auto; display: flex; align-items: center; padding-right: 21px; }
.st-minus { width: 4px; height: 3px; background: #605e5c; }
.st-track { width: 125px; height: 1px; background: #605e5c; margin: 0 6px 0 5px; position: relative; }
.st-thumb { position: absolute; left: 44px; top: -6px; width: 4px; height: 13px; background: #605e5c; }
.st-tick { position: absolute; left: 61px; top: -4px; width: 1px; height: 9px; background: #8a8886; }
.st-pct { margin-left: 17px; font-size: 14.4px; color: #605e5c; }
.st-fit { margin-left: 25px; }
```
